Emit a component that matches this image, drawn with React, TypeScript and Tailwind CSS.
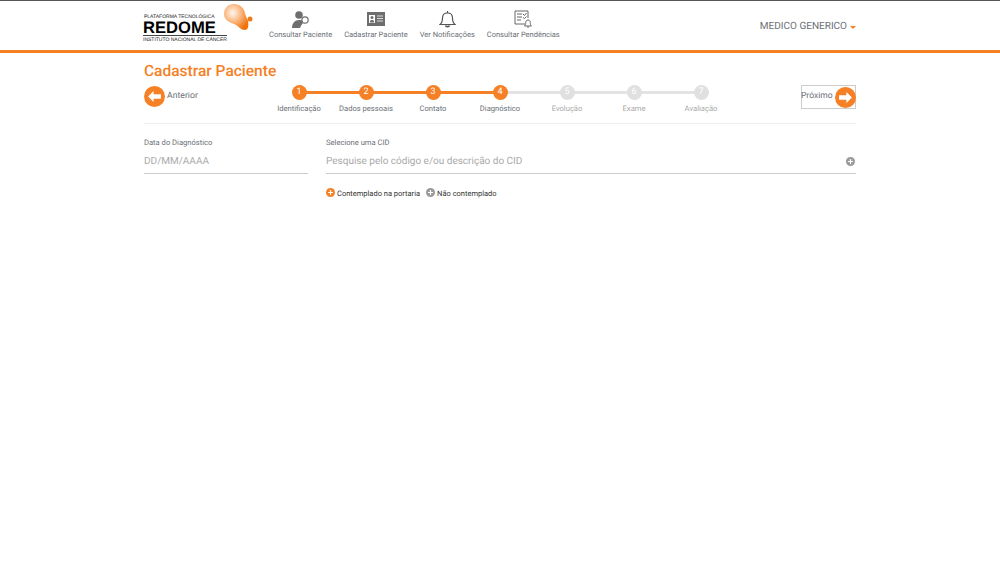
import type { ReactNode } from "react"
import { Plus } from "lucide-react"

const steps = [
  { n: 1, label: "Identificação", done: true },
  { n: 2, label: "Dados pessoais", done: true },
  { n: 3, label: "Contato", done: true },
  { n: 4, label: "Diagnóstico", done: true },
  { n: 5, label: "Evolução", done: false },
  { n: 6, label: "Exame", done: false },
  { n: 7, label: "Avaliação", done: false },
]

function Logo() {
  return (
    <div className="relative w-[111px] h-[46px] font-['Liberation_Sans',sans-serif] text-black">
      <div className="absolute left-0 top-[12px] text-[5px] leading-[8px] whitespace-nowrap text-[#222]">PLATAFORMA TECNOLÓGICA</div>
      <div className="absolute -left-px top-[17px] text-[16.6px] leading-[20px] font-bold whitespace-nowrap">REDOME</div>
      <div className="absolute -left-px top-[34px] w-[84px] h-px bg-[#444]"></div>
      <div className="absolute -left-px top-[35px] text-[5px] leading-[8px] whitespace-nowrap text-[#222]">INSTITUTO NACIONAL DE CÂNCER</div>
      {/* logo bulb */}
      <svg className="absolute left-[78px] top-[1px]" width="33" height="31" viewBox="0 0 33 31">
        <defs>
          <radialGradient id="bulb" cx="0.36" cy="0.34" r="0.7">
            <stop offset="0" stopColor="#fff6ee" />
            <stop offset="0.42" stopColor="#fcc08f" />
            <stop offset="1" stopColor="#ef7410" />
          </radialGradient>
        </defs>
        <path d="M2 12C2 6 6 2 12 2c6 0 10 4 11 9 .5 3 2 5 3 8 1 5 0 9-3 9-3 .5-6-3-9-5-3-2-12-3-12-11z" fill="url(#bulb)" />
        <circle cx="28" cy="17" r="2.500" fill="#f07a16" />
      </svg>
    </div>
  )
}

function NavItem({ label, icon }: { label: string; icon: ReactNode }) {
  return (
    <div className="flex flex-col items-center">
      <div className="h-[18px] flex items-end">{icon}</div>
      <span className="mt-px text-[7.5px] leading-[12px] text-[#6b6f76] whitespace-nowrap">{label}</span>
    </div>
  )
}

function Step({ n, label, done, last }: { n: number; label: string; done: boolean; last: boolean }) {
  return (
    <div className="relative w-[67px] flex flex-col items-center">
      {!last && (
        <div className={`absolute left-[33px] top-[6px] h-[3px] w-[67px] ${n < 4 ? "bg-[#f58025]" : "bg-[#e3e3e3]"}`}></div>
      )}
      <div
        className={`relative w-[15px] h-[15px] rounded-full flex items-center justify-center text-[9px] text-white ${done ? "bg-[#f58025]" : "bg-[#e0e0e0]"}`}
      >
        {n}
      </div>
      <span className={`mt-[3px] text-[7.6px] leading-[12px] whitespace-nowrap ${done ? "text-[#6b6f76]" : "text-[#a9a9a9]"}`}>{label}</span>
    </div>
  )
}

function RoundArrow({ flip }: { flip?: boolean }) {
  return (
    <span className={`w-[21px] h-[21px] rounded-full bg-[#f58025] flex items-center justify-center ${flip ? "-mr-px" : ""}`}>
      <svg width="13" height="11" viewBox="0 0 14 12" className={flip ? "rotate-180" : ""}>
        <path d="M0 6l6-6v3.500h8v5H6V12z" fill="#fff" />
      </svg>
    </span>
  )
}

function PlusDot({ color }: { color: string }) {
  return (
    <span className={`w-[9px] h-[9px] rounded-full flex items-center justify-center text-white ${color}`}>
      <Plus size={7} strokeWidth={4} />
    </span>
  )
}

export default function App() {
  return (
    <div className="min-h-[563px] bg-white font-['Roboto',sans-serif] [text-rendering:geometricPrecision] antialiased">
      <header className="h-[53px] border-t border-t-[#555] border-b-[3px] border-b-[#f58025]">
        <div className="w-[712px] ml-[144px] flex">
          <Logo />
          <nav className="ml-[14px] flex gap-[12px] pt-[9px]">
            <NavItem
              label="Consultar Paciente"
              icon={
                <svg width="20" height="17" viewBox="0 0 20 17">
                  <circle cx="8" cy="4" r="3.800" fill="#6e6e6e" />
                  <path d="M1 17c0-5 3-8 7-8 2 0 3 .5 4 1l-3 7H1z" fill="#6e6e6e" />
                  <circle cx="14" cy="9" r="3.200" fill="none" stroke="#6e6e6e" strokeWidth="1.200" />
                  <path d="M11.500 11.500l-3 3.500" stroke="#6e6e6e" strokeWidth="1.400" />
                </svg>
              }
            />
            <NavItem
              label="Cadastrar Paciente"
              icon={
                <svg width="18" height="14" viewBox="0 0 18 14" className="mb-[2px]">
                  <rect width="18" height="14" fill="#6e6e6e" />
                  <rect x="2" y="3" width="6" height="8" fill="#fff" />
                  <circle cx="5" cy="5.500" r="1.500" fill="#6e6e6e" />
                  <path d="M2.800 10.500c0-2 1-2.500 2.200-2.500s2.200.5 2.200 2.500z" fill="#6e6e6e" />
                  <path d="M10 4h6M10 6.500h6M10 9h6" stroke="#ddd" strokeWidth="1" />
                </svg>
              }
            />
            <NavItem
              label="Ver Notificações"
              icon={
                <svg width="17" height="18" viewBox="0 0 17 18" fill="none" stroke="#555" strokeWidth="1.200">
                  <path d="M1 14.500c2-1.500 2.500-3 2.500-6.500 0-3 2-5 5-5s5 2 5 5c0 3.500.5 5 2.500 6.500z" />
                  <path d="M8.500 1v2" />
                  <path d="M6.500 15.500c.5 1.500 3.500 1.500 4 0" strokeWidth="1.600" />
                </svg>
              }
            />
            <NavItem
              label="Consultar Pendências"
              icon={
                <svg width="19" height="18" viewBox="0 0 19 18" fill="none" stroke="#666" strokeWidth="1">
                  <path d="M11 14H1V1h13v7" />
                  <path d="M3 4h5M3 7h5M3 10h4" />
                  <path d="M9 4l1.500 1.500L12.500 3M9 7.500l1.500 1L12.500 6.500" />
                  <path d="M10.500 16c1-1 1.200-1.800 1.200-3.500 0-1.500 1-2.500 2.300-2.500s2.300 1 2.300 2.500c0 1.700.2 2.500 1.200 3.500z" />
                  <path d="M13 17h2" />
                </svg>
              }
            />
          </nav>
          <div className="ml-auto pt-[19px] flex items-start">
            <span className="text-[10px] leading-[14px] text-[#6b6f76]">MEDICO GENERICO</span>
            <span className="ml-[3px] mt-[6px] border-x-[3px] border-x-transparent border-t-[3px] border-t-[#f58025]"></span>
          </div>
        </div>
      </header>

      <main className="w-[712px] ml-[144px]">
        <h1 className="mt-[9px] text-[15.5px] leading-[18px] font-medium text-[#f58025]">Cadastrar Paciente</h1>

        <div className="mt-[5px] h-[35px] flex border-b border-[#eeeeee] box-content pb-[3px]">
          <div className="w-[100px] flex items-start pt-[1px]">
            <RoundArrow flip={false} />
            <span className="ml-[2px] text-[8.7px] leading-[20px] text-[#6b6f76]">Anterior</span>
          </div>
          <div className="flex ml-[21.5px]">
            {steps.map((s, i) => (
              <Step key={s.n} n={s.n} label={s.label} done={s.done} last={i === steps.length - 1} />
            ))}
          </div>
          <div className="ml-auto w-[55px] h-[24px] border border-[#cccccc] flex items-center justify-between">
            <span className="text-[8.5px] leading-[18px] -mt-[3px] text-[#6b6f76] -ml-px">Próximo</span>
            <RoundArrow flip={true} />
          </div>
        </div>

        <div className="mt-[13px] flex gap-[18px]">
          <div className="w-[164px]">
            <div className="text-[7.6px] leading-[12px] text-[#6b6f76]">Data do Diagnóstico</div>
            <div className="mt-[6px] h-[19px] border-b border-[#cccccc] text-[10px] leading-[14px] text-[#a9a9a9]">DD/MM/AAAA</div>
          </div>
          <div className="flex-1">
            <div className="text-[7.6px] leading-[12px] text-[#6b6f76]">Selecione uma CID</div>
            <div className="mt-[6px] h-[19px] border-b border-[#cccccc] flex justify-between text-[10px] leading-[14px] text-[#a9a9a9]">
              <span>Pesquise pelo código e/ou descrição do CID</span>
              <span className="mt-[2px] mr-px h-[9px]">
                <PlusDot color="bg-[#9a9a9a]" />
              </span>
            </div>
            <div className="mt-[14px] flex items-start text-[7.5px] leading-[12px] text-[#333]">
              <PlusDot color="bg-[#f58025]" />
              <span className="ml-[2px]">Contemplado na portaria</span>
              <span className="ml-[6px]">
                <PlusDot color="bg-[#9a9a9a]" />
              </span>
              <span className="ml-[2px]">Não contemplado</span>
            </div>
          </div>
        </div>
      </main>
    </div>
  )
}
